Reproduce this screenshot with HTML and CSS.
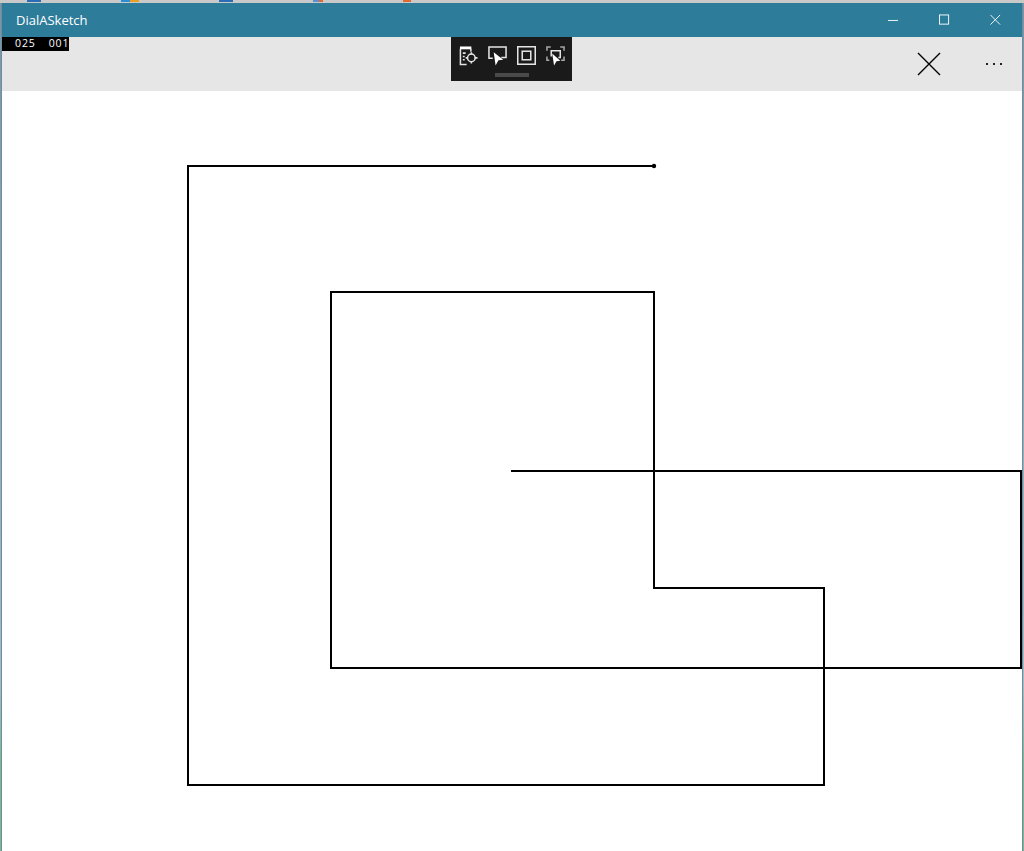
FILE: index.html
```html
<!DOCTYPE html>
<html lang="en">
<head>
    <meta charset="UTF-8">
    <title>DialASketch</title>
    <link rel="stylesheet" href="styles.css">
</head>
<body>
    <div class="desktop">
        <!-- bits of the browser tabs showing behind the window -->
        <div class="tab-strip">
            <i class="tab-icon tab-blue"></i>
            <i class="tab-icon tab-orange"></i>
            <i class="tab-icon tab-blue"></i>
            <i class="tab-icon tab-mixed"></i>
            <i class="tab-icon tab-red"></i>
        </div>
        <div class="window">
            <header class="titlebar">
                <span class="app-title">DialASketch</span>
                <div class="caption-buttons">
                    <svg class="caption-icon" viewBox="0 0 12 12"><path d="M0 6.5H11" /></svg>
                    <svg class="caption-icon" viewBox="0 0 12 12"><rect x="0.5" y="0.5" width="10" height="10" /></svg>
                    <svg class="caption-icon" viewBox="0 0 12 12"><path d="M0.5 0.5L11 11M11 0.5L0.5 11" /></svg>
                </div>
            </header>

            <div class="command-bar">
                <svg class="close-icon" viewBox="0 0 24 24"><path d="M1 1L23 23M23 1L1 23" /></svg>
                <div class="more-dots"><i></i><i></i><i></i></div>
            </div>

            <div class="canvas">
                <svg class="sketch" viewBox="0 0 1020 760">
                    <polyline points="652,75 186,75 186,694 822,694 822,497 652,497 652,201 329,201 329,577 1019,577 1019,380 509,380" />
                    <circle cx="652" cy="75" r="2.2" />
                </svg>
            </div>

            <!-- frame counter, sits over the title bar edge -->
            <div class="frame-counter"><span>025</span><span>001</span></div>

            <!-- xaml debug toolbar -->
            <div class="debug-toolbar">
                <div class="debug-icons">
                    <svg class="debug-icon" viewBox="0 0 20 20">
                        <path class="fill" d="M1 0.500H13V3.500H1Z" />
                        <path d="M1.500 3V19.500H8M4 7.500H7M4 11H6M4 14.500H6M12.500 3V6" />
                        <circle cx="13" cy="12.500" r="4" />
                        <path d="M13 6.500V9M13 16V18.500M7 12.500H9.500M16.500 12.500H19.500" />
                    </svg>
                    <svg class="debug-icon" viewBox="0 0 20 20">
                        <path d="M5 13H1V1H19V12H14" />
                        <path class="fill" d="M6 6.500L16 14.500L11 15L8 20.500Z" />
                    </svg>
                    <svg class="debug-icon" viewBox="0 0 20 20">
                        <rect x="0.800" y="0.800" width="18.400" height="18.400" />
                        <rect x="5.500" y="5.500" width="9" height="9" />
                    </svg>
                    <svg class="debug-icon" viewBox="0 0 20 20">
                        <path class="dim" d="M1 5V1H5M15 1H19V5M1 11V15H3.500M19 11V15H16" />
                        <path d="M5.500 11V5H15V12H13" />
                        <path class="fill" d="M6.500 8L15 15.500L11 16L8.500 20.500Z" />
                    </svg>
                </div>
                <div class="debug-grip"></div>
            </div>
        </div>
    </div>
</body>
</html>
```

FILE: styles.css
```css
* {
    box-sizing: border-box;
}

html, body {
    margin: 0;
    height: 100%;
    overflow: hidden;
}

.desktop {
    position: relative;
    height: 851px;
    padding: 3px 1px 0 1px;
    background: linear-gradient(#8a8f96 0%, #b0b6bc 80%, #8fb27a 90%, #8fb27a 100%);
}

.tab-strip {
    position: absolute;
    top: 0;
    left: 0;
    display: flex;
    gap: 80px;
    width: 100%;
    height: 3px;
    padding-left: 27px;
    background-color: #c9c9c9;
}

.tab-icon {
    width: 14px;
    height: 2px;
}

.tab-blue {
    background-color: #2a6db5;
}

.tab-orange {
    width: 18px;
    background: linear-gradient(90deg, #2a8fd8 50%, #e8a020 50%);
}

.tab-mixed {
    width: 10px;
    background: linear-gradient(90deg, #5a8fd0 60%, #e06a30 60%);
}

.tab-red {
    width: 8px;
    background-color: #e06a30;
}

.window {
    position: relative;
    display: flex;
    flex-direction: column;
    height: 100%;
    border-left: 1px solid #5f92ad;
    border-right: 1px solid #5f92ad;
    background-color: white;
    font-family: "Open Sans", "Noto Sans", sans-serif;
}

.titlebar {
    display: flex;
    justify-content: space-between;
    align-items: center;
    flex: 0 0 34px;
    padding-left: 14px;
    color: white;
    background-color: #2d7d9a;
}

.app-title {
    font-size: 13px;
}

.caption-buttons {
    display: flex;
    height: 100%;
    margin-right: 1px;
}

.caption-icon {
    width: 51px;
    height: 100%;
    padding: 11px 20px;
    overflow: visible;
    fill: none;
    stroke: white;
    stroke-width: 1;
}

.command-bar {
    display: flex;
    justify-content: flex-end;
    align-items: center;
    flex: 0 0 54px;
    padding: 0 20px 0 0;
    background-color: #e6e6e6;
}

.close-icon {
    width: 24px;
    height: 24px;
    margin: 0 45px 0 0;
    fill: none;
    stroke: black;
    stroke-width: 1.4;
}

.more-dots {
    display: flex;
    gap: 5px;
}

.more-dots i {
    width: 2px;
    height: 2px;
    background-color: #222;
}

.canvas {
    flex: 1;
}

.sketch {
    display: block;
    width: 1020px;
    height: 760px;
}

.sketch polyline {
    fill: none;
    stroke: black;
    stroke-width: 2;
}

.frame-counter {
    position: absolute;
    top: 34px;
    left: 0;
    display: flex;
    gap: 13px;
    width: 67px;
    height: 14px;
    padding-left: 13px;
    color: white;
    background-color: black;
    font-size: 10.500px;
    line-height: 13px;
    letter-spacing: 0.9px;
}

.debug-toolbar {
    position: absolute;
    top: 34px;
    left: 449px;
    width: 121px;
    height: 44px;
    padding-top: 9px;
    background-color: #1a1a1a;
}

.debug-icons {
    display: flex;
    justify-content: center;
    gap: 10px;
}

.debug-icon {
    width: 19px;
    height: 19px;
    overflow: visible;
    fill: none;
    stroke: #e4e4e4;
    stroke-width: 1.600;
}

.debug-icon .fill {
    fill: white;
    stroke: none;
}

.debug-icon .dim {
    stroke: #a8a8a8;
}

.debug-grip {
    width: 34px;
    height: 4px;
    margin: 8px auto 0;
    background-color: #4a4a4a;
}
```
